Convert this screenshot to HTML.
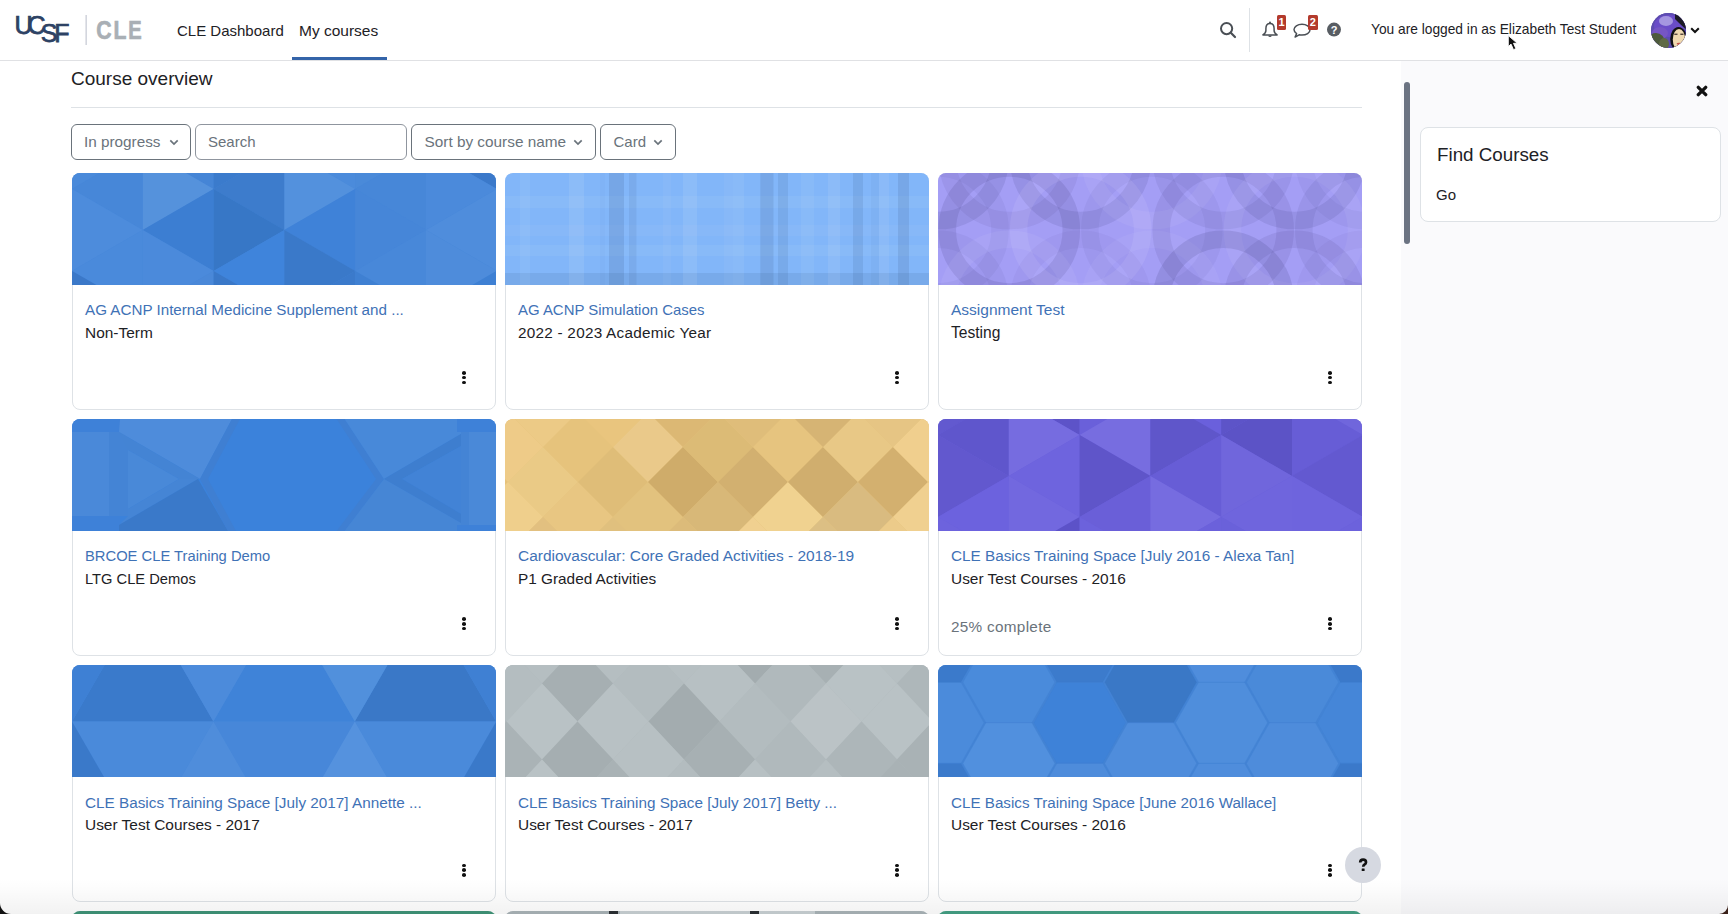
<!DOCTYPE html>
<html><head><meta charset="utf-8">
<style>
*{box-sizing:border-box;margin:0;padding:0}
html,body{width:1728px;height:914px;overflow:hidden;background:#fff;font-family:"Liberation Sans",sans-serif;color:#1d2125}
.abs{position:absolute}
#nav{position:absolute;left:0;top:0;width:1728px;height:61px;background:#fff;border-bottom:1px solid #e0e1e4}
.navt{position:absolute;top:21px;font-size:15px;line-height:20px;color:#1d2125;white-space:nowrap}
#drawer{position:absolute;left:1401px;top:61px;width:327px;height:853px;background:#fafafc}
.btn{position:absolute;top:123.5px;height:36px;border:1px solid #6a737b;border-radius:6px;color:#6a737b;font-size:15px;line-height:34px;padding-left:12.5px;white-space:nowrap}
.chev{position:absolute;top:14.2px}
.card{position:absolute;width:424px;height:237px;border:1px solid #dee2e6;border-radius:8px;background:#fff}
.cimg{position:absolute;width:424px;height:112px;border-radius:8px 8px 0 0;overflow:hidden}
.cimg svg{display:block}
.ttl{position:absolute;left:12.5px;top:126.5px;font-size:15.2px;line-height:20px;color:#3f72b6;white-space:nowrap}
.cat{position:absolute;left:12.5px;top:149px;font-size:15.3px;line-height:20px;color:#1d2125;white-space:nowrap}
.prog{position:absolute;left:12.5px;top:197px;font-size:15.3px;line-height:20px;color:#6a737b;white-space:nowrap}
.dots{position:absolute;left:389.5px;top:197.5px;width:4px;height:14px}
.dots i{position:absolute;left:0;width:4px;height:3.6px;border-radius:50%;background:#111}
</style></head>
<body>
<div id="nav">
  <!-- UCSF logo -->
  <svg class="abs" style="left:0;top:0" width="160" height="60" viewBox="0 0 160 60">
    <g fill="#2d4264" stroke="#2d4264" stroke-width="0.75" font-family="Liberation Sans" font-size="25">
      <text x="14.6" y="34">U</text>
      <text x="27.6" y="34">C</text>
      <text x="40.7" y="41.5">S</text>
      <text x="54.2" y="41.5">F</text>
    </g>
    <rect x="85.5" y="15" width="1.3" height="30" fill="#c9ccd6"/>
    <g fill="#a9afb5" stroke="#a9afb5" stroke-width="0.7" font-family="Liberation Sans" font-weight="700" font-size="26.5">
      <text transform="translate(96.2 39) scale(0.8 1)">C</text>
      <text transform="translate(113.6 39) scale(0.8 1)">L</text>
      <text transform="translate(128.2 39) scale(0.76 1)">E</text>
    </g>
  </svg>
  <div class="navt" style="left:177px">CLE Dashboard</div>
  <div class="navt" style="left:299px;font-size:15.5px">My courses</div>
  <div class="abs" style="left:291.5px;top:57px;width:95px;height:3px;background:#3464a9"></div>
  <!-- icons -->
  <svg class="abs" style="left:1219px;top:21px" width="18" height="18" viewBox="0 0 18 18">
    <circle cx="7.6" cy="7.6" r="5.6" fill="none" stroke="#4a4f55" stroke-width="2"/>
    <line x1="11.8" y1="11.8" x2="16" y2="16" stroke="#4a4f55" stroke-width="2.2" stroke-linecap="round"/>
  </svg>
  <div class="abs" style="left:1249px;top:8px;width:1px;height:44px;background:#dee2e6"></div>
  <svg class="abs" style="left:1260px;top:20px" width="20" height="20" viewBox="0 0 20 20">
    <path d="M10 3.4C7.3 3.4 5.9 5.4 5.9 8.4V10.6C5.9 12.5 4.8 13.8 2.9 14.9H17.1C15.2 13.8 14.1 12.5 14.1 10.6V8.4C14.1 5.4 12.7 3.4 10 3.4z" fill="none" stroke="#4a4f55" stroke-width="1.5" stroke-linejoin="round"/>
    <circle cx="10" cy="2.5" r="1" fill="#4a4f55"/>
    <path d="M8.3 15.4a1.7 1.7 0 0 0 3.4 0z" fill="#4a4f55"/>
  </svg>
  <div class="abs" style="left:1277px;top:15px;width:9px;height:15px;background:#b33a2c;border-radius:1.5px;color:#fff;font-size:11px;font-weight:700;line-height:15px;text-align:center">1</div>
  <svg class="abs" style="left:1292px;top:21px" width="22" height="19" viewBox="0 0 22 19">
    <path d="M10 3.2c-4.4 0-8 2.4-8 5.4 0 1.6 1 3 2.6 4l-1.5 3.5 4-2.3c.9.2 1.9.3 2.9.3 4.4 0 8-2.4 8-5.4s-3.6-5.5-8-5.5z" fill="none" stroke="#4a4f55" stroke-width="1.5" stroke-linejoin="round"/>
  </svg>
  <div class="abs" style="left:1307.5px;top:15px;width:10.5px;height:15px;background:#b33a2c;border-radius:1.5px;color:#fff;font-size:11px;font-weight:700;line-height:15px;text-align:center">2</div>
  <svg class="abs" style="left:1326px;top:22px" width="16" height="16" viewBox="0 0 16 16">
    <circle cx="8" cy="7.6" r="7" fill="#585d63"/>
    <text x="8" y="12.2" text-anchor="middle" fill="#fff" font-family="Liberation Sans" font-weight="700" font-size="11">?</text>
  </svg>
  <div class="abs" style="left:1371px;top:20px;font-size:13.75px;line-height:20px;color:#1d2125;white-space:nowrap">You are logged in as Elizabeth Test Student</div>
  <!-- avatar -->
  <div class="abs" style="left:1651px;top:12.5px;width:35px;height:35px;border-radius:50%;overflow:hidden;background:#5a4aa8">
    <svg width="35" height="35" viewBox="0 0 35 35">
      <rect width="35" height="35" fill="#5d4cb0"/>
      <ellipse cx="18" cy="13" rx="15" ry="11" fill="#6a4cc8"/>
      <ellipse cx="15" cy="8" rx="7" ry="5" fill="#a596e0"/>
      <ellipse cx="9" cy="20" rx="8" ry="6" fill="#7656c4"/>
      <path d="M24 0H35V16C32 14 28 10 24 6z" fill="#1c1b26"/>
      <ellipse cx="5" cy="29" rx="9" ry="9" fill="#4d5a3c"/>
      <ellipse cx="13" cy="31" rx="5" ry="6" fill="#5f6a45"/>
      <ellipse cx="27.5" cy="26" rx="8.3" ry="12" fill="#121114"/>
      <ellipse cx="28" cy="26.5" rx="6.2" ry="10.5" fill="#f0d9b0"/>
      <rect x="23.3" y="20.6" width="3.2" height="1.3" fill="#4a3a35"/>
      <rect x="29.3" y="20.6" width="3.2" height="1.3" fill="#4a3a35"/>
      <ellipse cx="28.2" cy="30.8" rx="2.6" ry="1.1" fill="#c4524a"/>
    </svg>
  </div>
  <svg class="abs" style="left:1690px;top:27px" width="10" height="7" viewBox="0 0 10 7">
    <path d="M1.2 1.2 5 5 8.8 1.2" fill="none" stroke="#111" stroke-width="2"/>
  </svg>
</div>

<div id="drawer">
  <div class="abs" style="left:3px;top:20.5px;width:6px;height:162.5px;border-radius:3px;background:#6b7382"></div>
  <svg class="abs" style="left:295px;top:24px" width="12" height="12" viewBox="0 0 12 12">
    <path d="M2.3 2.3 9.7 9.7M9.7 2.3 2.3 9.7" stroke="#111" stroke-width="3.3" stroke-linecap="round"/>
  </svg>
  <div class="abs" style="left:19px;top:65.6px;width:301px;height:95.5px;background:#fff;border:1px solid #dee2e6;border-radius:8px">
    <div class="abs" style="left:16px;top:15.6px;font-size:18.8px;line-height:24px;color:#1d2125;white-space:nowrap">Find Courses</div>
    <div class="abs" style="left:15px;top:57.3px;font-size:15px;line-height:20px;color:#1d2125">Go</div>
  </div>
</div>

<!-- main -->
<div class="abs" style="left:71px;top:67px;font-size:19px;line-height:24px;color:#1d2125;white-space:nowrap">Course overview</div>
<div class="abs" style="left:71px;top:106.5px;width:1291px;height:1px;background:#dee2e6"></div>

<div class="btn" style="left:71px;width:120px;font-size:15.3px;padding-left:12px">In progress<svg class="chev" style="left:97px" width="10" height="7" viewBox="0 0 10 7"><path d="M1.3 1.3 5 5 8.7 1.3" fill="none" stroke="#6a737b" stroke-width="1.7"/></svg></div>
<div class="btn" style="left:194.5px;width:212px;border-color:#8f959e">Search</div>
<div class="btn" style="left:411px;width:185px;font-size:15.35px">Sort by course name<svg class="chev" style="left:161px" width="10" height="7" viewBox="0 0 10 7"><path d="M1.3 1.3 5 5 8.7 1.3" fill="none" stroke="#6a737b" stroke-width="1.7"/></svg></div>
<div class="btn" style="left:600px;width:75.5px">Card<svg class="chev" style="left:52px" width="10" height="7" viewBox="0 0 10 7"><path d="M1.3 1.3 5 5 8.7 1.3" fill="none" stroke="#6a737b" stroke-width="1.7"/></svg></div>

<!--CARDS-->
<div class="card" style="left:71.5px;top:172.5px"><div class="ttl" style="font-size:15.2px">AG ACNP Internal Medicine Supplement and ...</div><div class="cat" style="font-size:15.45px">Non-Term</div><div class="dots"><i style="top:0"></i><i style="top:4.8px"></i><i style="top:9.6px"></i></div></div><div class="cimg" style="left:71.5px;top:172.5px"><svg width="424" height="112" viewBox="0 0 424 112"><rect width="424" height="112" fill="#4586d8"/><polygon points="0.0,-65.9 70.8,-25.0 0.0,16.0" fill="#4a8ada"/><polygon points="70.8,-25.0 0.0,16.0 70.8,57.0" fill="#4787d8"/><polygon points="0.0,16.0 70.8,57.0 0.0,97.9" fill="#4d8cdc"/><polygon points="70.8,57.0 0.0,97.9 70.8,138.9" fill="#4a8adb"/><polygon points="0.0,97.9 70.8,138.9 0.0,179.8" fill="#3b78c8"/><polygon points="141.6,-65.9 70.8,-25.0 141.6,16.0" fill="#4585d6"/><polygon points="70.8,-25.0 141.6,16.0 70.8,57.0" fill="#5592dc"/><polygon points="141.6,16.0 70.8,57.0 141.6,97.9" fill="#3c7ed2"/><polygon points="70.8,57.0 141.6,97.9 70.8,138.9" fill="#4b8adb"/><polygon points="141.6,97.9 70.8,138.9 141.6,179.8" fill="#4a88d8"/><polygon points="141.6,-65.9 212.4,-25.0 141.6,16.0" fill="#3b7bcc"/><polygon points="212.4,-25.0 141.6,16.0 212.4,57.0" fill="#3d7ccc"/><polygon points="141.6,16.0 212.4,57.0 141.6,97.9" fill="#3777c6"/><polygon points="212.4,57.0 141.6,97.9 212.4,138.9" fill="#3f84db"/><polygon points="141.6,97.9 212.4,138.9 141.6,179.8" fill="#3a78c8"/><polygon points="283.2,-65.9 212.4,-25.0 283.2,16.0" fill="#4b8bdb"/><polygon points="212.4,-25.0 283.2,16.0 212.4,57.0" fill="#5391dd"/><polygon points="283.2,16.0 212.4,57.0 283.2,97.9" fill="#3f82d8"/><polygon points="212.4,57.0 283.2,97.9 212.4,138.9" fill="#3a79c9"/><polygon points="283.2,97.9 212.4,138.9 283.2,179.8" fill="#3b7acb"/><polygon points="283.2,-65.9 354.0,-25.0 283.2,16.0" fill="#4a8ad9"/><polygon points="354.0,-25.0 283.2,16.0 354.0,57.0" fill="#4787d8"/><polygon points="283.2,16.0 354.0,57.0 283.2,97.9" fill="#4686d8"/><polygon points="354.0,57.0 283.2,97.9 354.0,138.9" fill="#4888d9"/><polygon points="283.2,97.9 354.0,138.9 283.2,179.8" fill="#3f80d2"/><polygon points="424.8,-65.9 354.0,-25.0 424.8,16.0" fill="#3b79ca"/><polygon points="354.0,-25.0 424.8,16.0 354.0,57.0" fill="#4b8adb"/><polygon points="424.8,16.0 354.0,57.0 424.8,97.9" fill="#4f8ddc"/><polygon points="354.0,57.0 424.8,97.9 354.0,138.9" fill="#4e8cdb"/><polygon points="424.8,97.9 354.0,138.9 424.8,179.8" fill="#3e80d3"/></svg></div>
<div class="card" style="left:504.5px;top:172.5px"><div class="ttl" style="font-size:14.94px">AG ACNP Simulation Cases</div><div class="cat" style="font-size:15.3px;letter-spacing:0.25px">2022 - 2023 Academic Year</div><div class="dots"><i style="top:0"></i><i style="top:4.8px"></i><i style="top:9.6px"></i></div></div><div class="cimg" style="left:504.5px;top:172.5px"><svg width="424" height="112" viewBox="0 0 424 112"><rect width="424" height="112" fill="#82b6f9"/><rect x="0" y="23" width="424" height="12" fill="#e8eef5" fill-opacity="0.07"/><rect x="0" y="52" width="424" height="11" fill="#e8eef5" fill-opacity="0.05"/><rect x="0" y="72" width="424" height="11" fill="#e8eef5" fill-opacity="0.07"/><rect x="0" y="100" width="424" height="12" fill="#27406a" fill-opacity="0.10"/><rect x="15" y="0" width="10.0" height="112" fill="#e8eef5" fill-opacity="0.07"/><rect x="64" y="0" width="15.0" height="112" fill="#e8eef5" fill-opacity="0.11"/><rect x="95" y="0" width="5.0" height="112" fill="#27406a" fill-opacity="0.02"/><rect x="104" y="0" width="15.0" height="112" fill="#27406a" fill-opacity="0.13"/><rect x="124" y="0" width="7.5" height="112" fill="#27406a" fill-opacity="0.09"/><rect x="158" y="0" width="8.0" height="112" fill="#e8eef5" fill-opacity="0.05"/><rect x="178" y="0" width="14.0" height="112" fill="#e8eef5" fill-opacity="0.11"/><rect x="219" y="0" width="9.0" height="112" fill="#e8eef5" fill-opacity="0.05"/><rect x="228" y="0" width="11.0" height="112" fill="#e8eef5" fill-opacity="0.08"/><rect x="255.3" y="0" width="13.2" height="112" fill="#27406a" fill-opacity="0.12"/><rect x="273" y="0" width="10.0" height="112" fill="#27406a" fill-opacity="0.1"/><rect x="296" y="0" width="13.0" height="112" fill="#e8eef5" fill-opacity="0.07"/><rect x="323" y="0" width="12.0" height="112" fill="#e8eef5" fill-opacity="0.1"/><rect x="348" y="0" width="10.0" height="112" fill="#27406a" fill-opacity="0.11"/><rect x="366" y="0" width="8.0" height="112" fill="#27406a" fill-opacity="0.04"/><rect x="374" y="0" width="10.0" height="112" fill="#e8eef5" fill-opacity="0.09"/><rect x="393" y="0" width="11.0" height="112" fill="#27406a" fill-opacity="0.12"/></svg></div>
<div class="card" style="left:937.5px;top:172.5px"><div class="ttl" style="font-size:15.53px">Assignment Test</div><div class="cat" style="font-size:15.6px">Testing</div><div class="dots"><i style="top:0"></i><i style="top:4.8px"></i><i style="top:9.6px"></i></div></div><div class="cimg" style="left:937.5px;top:172.5px"><svg width="424" height="112" viewBox="0 0 424 112"><rect width="424" height="112" fill="#a49ef5"/><circle cx="0.0" cy="-14.4" r="62" fill="none" stroke="#2a2560" stroke-opacity="0.104" stroke-width="17.5"/><circle cx="71.3" cy="-14.4" r="62" fill="none" stroke="#2a2560" stroke-opacity="0.065" stroke-width="17.5"/><circle cx="142.6" cy="-14.4" r="62" fill="none" stroke="#2a2560" stroke-opacity="0.104" stroke-width="17.5"/><circle cx="213.9" cy="-14.4" r="62" fill="none" stroke="#e8e6ff" stroke-opacity="0.078" stroke-width="17.5"/><circle cx="285.2" cy="-14.4" r="62" fill="none" stroke="#2a2560" stroke-opacity="0.078" stroke-width="17.5"/><circle cx="356.5" cy="-14.4" r="62" fill="none" stroke="#2a2560" stroke-opacity="0.104" stroke-width="17.5"/><circle cx="427.8" cy="-14.4" r="62" fill="none" stroke="#2a2560" stroke-opacity="0.052" stroke-width="17.5"/><circle cx="0.0" cy="56.9" r="62" fill="none" stroke="#2a2560" stroke-opacity="0.052" stroke-width="17.5"/><circle cx="71.3" cy="56.9" r="62" fill="none" stroke="#2a2560" stroke-opacity="0.117" stroke-width="17.5"/><circle cx="142.6" cy="56.9" r="62" fill="none" stroke="#e8e6ff" stroke-opacity="0.104" stroke-width="17.5"/><circle cx="213.9" cy="56.9" r="62" fill="none" stroke="#2a2560" stroke-opacity="0.052" stroke-width="17.5"/><circle cx="285.2" cy="56.9" r="62" fill="none" stroke="#2a2560" stroke-opacity="0.091" stroke-width="17.5"/><circle cx="356.5" cy="56.9" r="62" fill="none" stroke="#e8e6ff" stroke-opacity="0.078" stroke-width="17.5"/><circle cx="427.8" cy="56.9" r="62" fill="none" stroke="#2a2560" stroke-opacity="0.078" stroke-width="17.5"/><circle cx="0.0" cy="128.2" r="62" fill="none" stroke="#2a2560" stroke-opacity="0.052" stroke-width="17.5"/><circle cx="71.3" cy="128.2" r="62" fill="none" stroke="#e8e6ff" stroke-opacity="0.078" stroke-width="17.5"/><circle cx="142.6" cy="128.2" r="62" fill="none" stroke="#2a2560" stroke-opacity="0.039" stroke-width="17.5"/><circle cx="213.9" cy="128.2" r="62" fill="none" stroke="#e8e6ff" stroke-opacity="0.065" stroke-width="17.5"/><circle cx="285.2" cy="128.2" r="62" fill="none" stroke="#2a2560" stroke-opacity="0.130" stroke-width="17.5"/><circle cx="356.5" cy="128.2" r="62" fill="none" stroke="#2a2560" stroke-opacity="0.091" stroke-width="17.5"/><circle cx="427.8" cy="128.2" r="62" fill="none" stroke="#2a2560" stroke-opacity="0.039" stroke-width="17.5"/></svg></div>
<div class="card" style="left:71.5px;top:418.75px"><div class="ttl" style="font-size:14.75px">BRCOE CLE Training Demo</div><div class="cat" style="font-size:14.7px">LTG CLE Demos</div><div class="dots"><i style="top:0"></i><i style="top:4.8px"></i><i style="top:9.6px"></i></div></div><div class="cimg" style="left:71.5px;top:418.75px"><svg width="424" height="112" viewBox="0 0 424 112"><rect width="424" height="112" fill="#3b82db"/><polygon points="0.0,0.0 48.0,0.0 48.0,13.0 0.0,13.0" fill="#3e81d8"/><polygon points="0.0,13.0 37.0,13.0 37.0,97.0 0.0,97.0" fill="#4a89d9"/><polygon points="37.0,13.0 56.0,13.0 56.0,97.0 37.0,97.0" fill="#4484d5"/><polygon points="0.0,97.0 48.0,97.0 48.0,112.0 0.0,112.0" fill="#3e81d8"/><polygon points="48.0,0.0 160.0,0.0 128.0,60.0 47.0,13.0" fill="#4e8cdb"/><polygon points="47.0,13.0 128.0,60.0 107.0,60.0 56.0,31.0" fill="#4484d4"/><polygon points="56.0,31.0 107.0,60.0 56.0,90.0" fill="#4989d8"/><polygon points="56.0,90.0 107.0,60.0 126.0,60.0 47.0,106.0 56.0,97.0" fill="#4585d5"/><polygon points="47.0,106.0 126.0,60.0 156.0,112.0 47.0,112.0" fill="#3a79c9"/><polygon points="160.0,0.0 168.0,0.0 136.0,60.0 164.0,112.0 156.0,112.0 128.0,60.0" fill="#3f7fd2"/><polygon points="272.6,0.0 264.6,0.0 304.0,60.0 264.6,112.0 272.6,112.0 312.0,60.0" fill="#3f7fd2"/><polygon points="272.6,0.0 385.0,0.0 389.0,13.0 389.0,15.0 312.0,60.0" fill="#4889d9"/><polygon points="312.0,60.0 389.0,15.0 389.0,27.0 330.0,60.0" fill="#3e7ecf"/><polygon points="330.0,60.0 389.0,27.0 389.0,95.0" fill="#4283d6"/><polygon points="312.0,60.0 330.0,60.0 389.0,95.0 389.0,104.0" fill="#3e7ecf"/><polygon points="272.6,112.0 312.0,60.0 389.0,104.0 389.0,112.0" fill="#4686d5"/><polygon points="389.0,13.0 424.0,13.0 424.0,106.0 389.0,106.0" fill="#4a89d8"/><polygon points="389.0,13.0 397.0,13.0 397.0,106.0 389.0,106.0" fill="#4484d5"/><polygon points="385.0,0.0 424.0,0.0 424.0,13.0 385.0,13.0" fill="#3e81d8"/><polygon points="385.0,106.0 424.0,106.0 424.0,112.0 385.0,112.0" fill="#3e81d8"/></svg></div>
<div class="card" style="left:504.5px;top:418.75px"><div class="ttl" style="font-size:15.47px">Cardiovascular: Core Graded Activities - 2018-19</div><div class="cat" style="font-size:15.35px">P1 Graded Activities</div><div class="dots"><i style="top:0"></i><i style="top:4.8px"></i><i style="top:9.6px"></i></div></div><div class="cimg" style="left:504.5px;top:418.75px"><svg width="424" height="112" viewBox="0 0 424 112"><rect width="424" height="112" fill="#e6c27b"/><polygon points="3.0,63.0 38.0,28.0 73.0,63.0 38.0,98.0" fill="#eaca86"/><polygon points="38.0,28.0 73.0,-7.0 108.0,28.0 73.0,63.0" fill="#e6c37c"/><polygon points="38.0,98.0 73.0,63.0 108.0,98.0 73.0,133.0" fill="#e8c682"/><polygon points="73.0,63.0 108.0,28.0 143.0,63.0 108.0,98.0" fill="#dfbd78"/><polygon points="108.0,28.0 143.0,-7.0 178.0,28.0 143.0,63.0" fill="#eac98a"/><polygon points="108.0,98.0 143.0,63.0 178.0,98.0 143.0,133.0" fill="#e2c27e"/><polygon points="143.0,63.0 178.0,28.0 213.0,63.0 178.0,98.0" fill="#cfac6a"/><polygon points="178.0,28.0 213.0,-7.0 248.0,28.0 213.0,63.0" fill="#dcbb76"/><polygon points="178.0,98.0 213.0,63.0 248.0,98.0 213.0,133.0" fill="#d8b878"/><polygon points="213.0,63.0 248.0,28.0 283.0,63.0 248.0,98.0" fill="#d2b070"/><polygon points="248.0,28.0 283.0,-7.0 318.0,28.0 283.0,63.0" fill="#e6c47f"/><polygon points="248.0,98.0 283.0,63.0 318.0,98.0 283.0,133.0" fill="#f0d290"/><polygon points="283.0,63.0 318.0,28.0 353.0,63.0 318.0,98.0" fill="#d0ae6e"/><polygon points="318.0,28.0 353.0,-7.0 388.0,28.0 353.0,63.0" fill="#e8c886"/><polygon points="318.0,98.0 353.0,63.0 388.0,98.0 353.0,133.0" fill="#d9bb80"/><polygon points="353.0,63.0 388.0,28.0 423.0,63.0 388.0,98.0" fill="#d3b06f"/><polygon points="388.0,28.0 423.0,-7.0 458.0,28.0 423.0,63.0" fill="#f0cf8e"/><polygon points="388.0,98.0 423.0,63.0 458.0,98.0 423.0,133.0" fill="#f0d090"/><polygon points="-32.0,28.0 3.0,-7.0 38.0,28.0 3.0,63.0" fill="#eecb88"/><polygon points="-32.0,98.0 3.0,63.0 38.0,98.0 3.0,133.0" fill="#efcf8c"/><polygon points="3.0,-7.0 38.0,-42.0 73.0,-7.0 38.0,28.0" fill="#ecca86"/><polygon points="73.0,-7.0 108.0,-42.0 143.0,-7.0 108.0,28.0" fill="#e9c57e"/><polygon points="143.0,-7.0 178.0,-42.0 213.0,-7.0 178.0,28.0" fill="#dcb874"/><polygon points="213.0,-7.0 248.0,-42.0 283.0,-7.0 248.0,28.0" fill="#dfbd7a"/><polygon points="283.0,-7.0 318.0,-42.0 353.0,-7.0 318.0,28.0" fill="#d6b474"/><polygon points="353.0,-7.0 388.0,-42.0 423.0,-7.0 388.0,28.0" fill="#e6c584"/><polygon points="3.0,133.0 38.0,98.0 73.0,133.0 38.0,168.0" fill="#e2c080"/><polygon points="73.0,133.0 108.0,98.0 143.0,133.0 108.0,168.0" fill="#e0c07e"/><polygon points="143.0,133.0 178.0,98.0 213.0,133.0 178.0,168.0" fill="#dcbb7a"/><polygon points="213.0,133.0 248.0,98.0 283.0,133.0 248.0,168.0" fill="#f0d090"/><polygon points="283.0,133.0 318.0,98.0 353.0,133.0 318.0,168.0" fill="#dcbf84"/><polygon points="353.0,133.0 388.0,98.0 423.0,133.0 388.0,168.0" fill="#eccb8a"/></svg></div>
<div class="card" style="left:937.5px;top:418.75px"><div class="ttl" style="font-size:15.3px">CLE Basics Training Space [July 2016 - Alexa Tan]</div><div class="cat" style="font-size:15.45px">User Test Courses - 2016</div><div class="prog" style="font-size:15.3px;letter-spacing:0.3px">25% complete</div><div class="dots"><i style="top:0"></i><i style="top:4.8px"></i><i style="top:9.6px"></i></div></div><div class="cimg" style="left:937.5px;top:418.75px"><svg width="424" height="112" viewBox="0 0 424 112"><rect width="424" height="112" fill="#6a60da"/><polygon points="0.0,-65.9 70.8,-25.0 0.0,16.0" fill="#6259cf"/><polygon points="70.8,-25.0 0.0,16.0 70.8,57.0" fill="#5f56cc"/><polygon points="0.0,16.0 70.8,57.0 0.0,97.9" fill="#6258ce"/><polygon points="70.8,57.0 0.0,97.9 70.8,138.9" fill="#6c62de"/><polygon points="0.0,97.9 70.8,138.9 0.0,179.8" fill="#6d63dd"/><polygon points="141.6,-65.9 70.8,-25.0 141.6,16.0" fill="#5d53c8"/><polygon points="70.8,-25.0 141.6,16.0 70.8,57.0" fill="#766ce0"/><polygon points="141.6,16.0 70.8,57.0 141.6,97.9" fill="#6e64de"/><polygon points="70.8,57.0 141.6,97.9 70.8,138.9" fill="#7268df"/><polygon points="141.6,97.9 70.8,138.9 141.6,179.8" fill="#5c52c8"/><polygon points="141.6,-65.9 212.4,-25.0 141.6,16.0" fill="#6a60da"/><polygon points="212.4,-25.0 141.6,16.0 212.4,57.0" fill="#776de0"/><polygon points="141.6,16.0 212.4,57.0 141.6,97.9" fill="#5f55c9"/><polygon points="212.4,57.0 141.6,97.9 212.4,138.9" fill="#6a5fd8"/><polygon points="141.6,97.9 212.4,138.9 141.6,179.8" fill="#6c62dc"/><polygon points="283.2,-65.9 212.4,-25.0 283.2,16.0" fill="#6a60dc"/><polygon points="212.4,-25.0 283.2,16.0 212.4,57.0" fill="#5f56ca"/><polygon points="283.2,16.0 212.4,57.0 283.2,97.9" fill="#675dd6"/><polygon points="212.4,57.0 283.2,97.9 212.4,138.9" fill="#766ce0"/><polygon points="283.2,97.9 212.4,138.9 283.2,179.8" fill="#6b61db"/><polygon points="283.2,-65.9 354.0,-25.0 283.2,16.0" fill="#5d54c8"/><polygon points="354.0,-25.0 283.2,16.0 354.0,57.0" fill="#5c53c6"/><polygon points="283.2,16.0 354.0,57.0 283.2,97.9" fill="#7066dc"/><polygon points="354.0,57.0 283.2,97.9 354.0,138.9" fill="#6f65dd"/><polygon points="283.2,97.9 354.0,138.9 283.2,179.8" fill="#6a61da"/><polygon points="424.8,-65.9 354.0,-25.0 424.8,16.0" fill="#7066dc"/><polygon points="354.0,-25.0 424.8,16.0 354.0,57.0" fill="#675dd6"/><polygon points="424.8,16.0 354.0,57.0 424.8,97.9" fill="#6359d0"/><polygon points="354.0,57.0 424.8,97.9 354.0,138.9" fill="#6e64dd"/><polygon points="424.8,97.9 354.0,138.9 424.8,179.8" fill="#6c62dc"/></svg></div>
<div class="card" style="left:71.5px;top:665.0px"><div class="ttl" style="font-size:15.3px">CLE Basics Training Space [July 2017] Annette ...</div><div class="cat" style="font-size:15.45px">User Test Courses - 2017</div><div class="dots"><i style="top:0"></i><i style="top:4.8px"></i><i style="top:9.6px"></i></div></div><div class="cimg" style="left:71.5px;top:665.0px"><svg width="424" height="112" viewBox="0 0 424 112"><rect width="424" height="112" fill="#4587da"/><polygon points="0.0,56.6 70.7,-65.9 141.4,56.6" fill="#3a7acb"/><polygon points="141.4,56.6 212.1,-65.9 282.8,56.6" fill="#3f83d8"/><polygon points="282.8,56.6 353.5,-65.9 424.2,56.6" fill="#3a78c7"/><polygon points="-70.7,-65.9 70.7,-65.9 0.0,56.6" fill="#3e80d4"/><polygon points="70.7,-65.9 212.1,-65.9 141.4,56.6" fill="#4c8bdb"/><polygon points="212.1,-65.9 353.5,-65.9 282.8,56.6" fill="#5190dc"/><polygon points="353.5,-65.9 494.9,-65.9 424.2,56.6" fill="#3f80d3"/><polygon points="0.0,56.6 141.4,56.6 70.7,179.1" fill="#4a8ada"/><polygon points="141.4,56.6 282.8,56.6 212.1,179.1" fill="#4787d9"/><polygon points="282.8,56.6 424.2,56.6 353.5,179.1" fill="#4a8ada"/><polygon points="0.0,56.6 -70.7,179.1 70.7,179.1" fill="#3a79c9"/><polygon points="141.4,56.6 70.7,179.1 212.1,179.1" fill="#4f8ddb"/><polygon points="282.8,56.6 212.1,179.1 353.5,179.1" fill="#5592de"/><polygon points="424.2,56.6 353.5,179.1 494.9,179.1" fill="#3a79c9"/></svg></div>
<div class="card" style="left:504.5px;top:665.0px"><div class="ttl" style="font-size:15.28px">CLE Basics Training Space [July 2017] Betty ...</div><div class="cat" style="font-size:15.45px">User Test Courses - 2017</div><div class="dots"><i style="top:0"></i><i style="top:4.8px"></i><i style="top:9.6px"></i></div></div><div class="cimg" style="left:504.5px;top:665.0px"><svg width="424" height="112" viewBox="0 0 424 112"><rect width="424" height="112" fill="#b0b9bc"/><polygon points="-69.5,-19.4 -34.0,-57.4 1.5,-19.4 -34.0,18.6" fill="#b0b9bc"/><polygon points="1.5,-19.4 37.0,-57.4 72.5,-19.4 37.0,18.6" fill="#b5bec1"/><polygon points="72.5,-19.4 108.0,-57.4 143.5,-19.4 108.0,18.6" fill="#b5bec1"/><polygon points="143.5,-19.4 179.0,-57.4 214.5,-19.4 179.0,18.6" fill="#b6bfc2"/><polygon points="214.5,-19.4 250.0,-57.4 285.5,-19.4 250.0,18.6" fill="#a3acaf"/><polygon points="285.5,-19.4 321.0,-57.4 356.5,-19.4 321.0,18.6" fill="#a7b0b3"/><polygon points="356.5,-19.4 392.0,-57.4 427.5,-19.4 392.0,18.6" fill="#b6bfc2"/><polygon points="-34.0,18.6 1.5,-19.4 37.0,18.6 1.5,56.6" fill="#b4bdc0"/><polygon points="37.0,18.6 72.5,-19.4 108.0,18.6 72.5,56.6" fill="#a6afb2"/><polygon points="108.0,18.6 143.5,-19.4 179.0,18.6 143.5,56.6" fill="#b3bcbf"/><polygon points="179.0,18.6 214.5,-19.4 250.0,18.6 214.5,56.6" fill="#b7c0c3"/><polygon points="250.0,18.6 285.5,-19.4 321.0,18.6 285.5,56.6" fill="#b0b9bc"/><polygon points="321.0,18.6 356.5,-19.4 392.0,18.6 356.5,56.6" fill="#b9c2c5"/><polygon points="392.0,18.6 427.5,-19.4 463.0,18.6 427.5,56.6" fill="#aeb7ba"/><polygon points="-69.5,56.6 -34.0,18.6 1.5,56.6 -34.0,94.6" fill="#b0b9bc"/><polygon points="1.5,56.6 37.0,18.6 72.5,56.6 37.0,94.6" fill="#b9c2c5"/><polygon points="72.5,56.6 108.0,18.6 143.5,56.6 108.0,94.6" fill="#b8c1c4"/><polygon points="143.5,56.6 179.0,18.6 214.5,56.6 179.0,94.6" fill="#a3acaf"/><polygon points="214.5,56.6 250.0,18.6 285.5,56.6 250.0,94.6" fill="#b3bcbf"/><polygon points="285.5,56.6 321.0,18.6 356.5,56.6 321.0,94.6" fill="#bbc3c6"/><polygon points="356.5,56.6 392.0,18.6 427.5,56.6 392.0,94.6" fill="#b9c2c5"/><polygon points="-34.0,94.6 1.5,56.6 37.0,94.6 1.5,132.6" fill="#aab3b6"/><polygon points="37.0,94.6 72.5,56.6 108.0,94.6 72.5,132.6" fill="#a5aeb1"/><polygon points="108.0,94.6 143.5,56.6 179.0,94.6 143.5,132.6" fill="#b7c0c3"/><polygon points="179.0,94.6 214.5,56.6 250.0,94.6 214.5,132.6" fill="#a7b0b3"/><polygon points="250.0,94.6 285.5,56.6 321.0,94.6 285.5,132.6" fill="#b0b9bc"/><polygon points="321.0,94.6 356.5,56.6 392.0,94.6 356.5,132.6" fill="#adb6b9"/><polygon points="392.0,94.6 427.5,56.6 463.0,94.6 427.5,132.6" fill="#a9b2b5"/><polygon points="-69.5,132.6 -34.0,94.6 1.5,132.6 -34.0,170.6" fill="#b0b9bc"/><polygon points="1.5,132.6 37.0,94.6 72.5,132.6 37.0,170.6" fill="#b9c2c5"/><polygon points="72.5,132.6 108.0,94.6 143.5,132.6 108.0,170.6" fill="#a9b2b5"/><polygon points="143.5,132.6 179.0,94.6 214.5,132.6 179.0,170.6" fill="#b3bcbf"/><polygon points="214.5,132.6 250.0,94.6 285.5,132.6 250.0,170.6" fill="#b7c0c3"/><polygon points="285.5,132.6 321.0,94.6 356.5,132.6 321.0,170.6" fill="#b5bec1"/><polygon points="356.5,132.6 392.0,94.6 427.5,132.6 392.0,170.6" fill="#a9b2b5"/></svg></div>
<div class="card" style="left:937.5px;top:665.0px"><div class="ttl" style="font-size:15.2px">CLE Basics Training Space [June 2016 Wallace]</div><div class="cat" style="font-size:15.45px">User Test Courses - 2016</div><div class="dots"><i style="top:0"></i><i style="top:4.8px"></i><i style="top:9.6px"></i></div></div><div class="cimg" style="left:937.5px;top:665.0px"><svg width="424" height="112" viewBox="0 0 424 112"><rect width="424" height="112" fill="#4484d5"/><polygon points="-46.0,57.8 -23.0,17.2 23.0,17.2 46.0,57.8 23.0,98.4 -23.0,98.4" fill="#4b8bdb" stroke="#3f7fd0" stroke-width="0.6" stroke-opacity="0.5"/><polygon points="24.9,17.2 47.9,-23.4 93.9,-23.4 116.9,17.2 93.9,57.8 47.9,57.8" fill="#4a8bdb" stroke="#3f7fd0" stroke-width="0.6" stroke-opacity="0.5"/><polygon points="24.9,98.4 47.9,57.8 93.9,57.8 116.9,98.4 93.9,139.0 47.9,139.0" fill="#5190de" stroke="#3f7fd0" stroke-width="0.6" stroke-opacity="0.5"/><polygon points="95.8,57.8 118.8,17.2 164.8,17.2 187.8,57.8 164.8,98.4 118.8,98.4" fill="#3e82d8" stroke="#3f7fd0" stroke-width="0.6" stroke-opacity="0.5"/><polygon points="166.7,17.2 189.7,-23.4 235.7,-23.4 258.7,17.2 235.7,57.8 189.7,57.8" fill="#3a78c6" stroke="#3f7fd0" stroke-width="0.6" stroke-opacity="0.5"/><polygon points="166.7,98.4 189.7,57.8 235.7,57.8 258.7,98.4 235.7,139.0 189.7,139.0" fill="#4f8ddc" stroke="#3f7fd0" stroke-width="0.6" stroke-opacity="0.5"/><polygon points="237.6,57.8 260.6,17.2 306.6,17.2 329.6,57.8 306.6,98.4 260.6,98.4" fill="#4f8edc" stroke="#3f7fd0" stroke-width="0.6" stroke-opacity="0.5"/><polygon points="308.5,17.2 331.5,-23.4 377.5,-23.4 400.5,17.2 377.5,57.8 331.5,57.8" fill="#4a8ad9" stroke="#3f7fd0" stroke-width="0.6" stroke-opacity="0.5"/><polygon points="308.5,98.4 331.5,57.8 377.5,57.8 400.5,98.4 377.5,139.0 331.5,139.0" fill="#4e8cdb" stroke="#3f7fd0" stroke-width="0.6" stroke-opacity="0.5"/><polygon points="379.4,57.8 402.4,17.2 448.4,17.2 471.4,57.8 448.4,98.4 402.4,98.4" fill="#4586d8" stroke="#3f7fd0" stroke-width="0.6" stroke-opacity="0.5"/><polygon points="-46.0,-23.4 -23.0,-64.0 23.0,-64.0 46.0,-23.4 23.0,17.2 -23.0,17.2" fill="#3b7acb" stroke="#3f7fd0" stroke-width="0.6" stroke-opacity="0.5"/><polygon points="-46.0,139.0 -23.0,98.4 23.0,98.4 46.0,139.0 23.0,179.6 -23.0,179.6" fill="#3b7acb" stroke="#3f7fd0" stroke-width="0.6" stroke-opacity="0.5"/><polygon points="95.8,-23.4 118.8,-64.0 164.8,-64.0 187.8,-23.4 164.8,17.2 118.8,17.2" fill="#3c7bcc" stroke="#3f7fd0" stroke-width="0.6" stroke-opacity="0.5"/><polygon points="237.6,-23.4 260.6,-64.0 306.6,-64.0 329.6,-23.4 306.6,17.2 260.6,17.2" fill="#4f8ddc" stroke="#3f7fd0" stroke-width="0.6" stroke-opacity="0.5"/><polygon points="379.4,-23.4 402.4,-64.0 448.4,-64.0 471.4,-23.4 448.4,17.2 402.4,17.2" fill="#3b79ca" stroke="#3f7fd0" stroke-width="0.6" stroke-opacity="0.5"/><polygon points="95.8,139.0 118.8,98.4 164.8,98.4 187.8,139.0 164.8,179.6 118.8,179.6" fill="#4e8cdb" stroke="#3f7fd0" stroke-width="0.6" stroke-opacity="0.5"/><polygon points="237.6,139.0 260.6,98.4 306.6,98.4 329.6,139.0 306.6,179.6 260.6,179.6" fill="#4f8ddc" stroke="#3f7fd0" stroke-width="0.6" stroke-opacity="0.5"/><polygon points="379.4,139.0 402.4,98.4 448.4,98.4 471.4,139.0 448.4,179.6 402.4,179.6" fill="#3b79ca" stroke="#3f7fd0" stroke-width="0.6" stroke-opacity="0.5"/></svg></div>
<div class="card" style="left:71.5px;top:911.25px"></div><div class="cimg" style="left:71.5px;top:911.25px"><svg width="424" height="112" viewBox="0 0 424 112"><rect width="424" height="112" fill="#3f9478"/></svg></div>
<div class="card" style="left:504.5px;top:911.25px"></div><div class="cimg" style="left:504.5px;top:911.25px"><svg width="424" height="112" viewBox="0 0 424 112"><rect width="424" height="112" fill="#aab4b8"/><rect x="104" y="0" width="9" height="10" fill="#2b2f33"/><rect x="115" y="0" width="195" height="10" fill="#c9d1d4"/><rect x="245" y="0" width="9" height="10" fill="#2b2f33"/></svg></div>
<div class="card" style="left:937.5px;top:911.25px"></div><div class="cimg" style="left:937.5px;top:911.25px"><svg width="424" height="112" viewBox="0 0 424 112"><rect width="424" height="112" fill="#44a084"/></svg></div>
<!--/CARDS-->


<!-- help button -->
<div class="abs" style="left:1345px;top:847px;width:36px;height:36px;border-radius:50%;background:#d6d9e1"></div>
<svg class="abs" style="left:1356px;top:857px" width="14" height="16" viewBox="0 0 14 16">
  <path d="M4.2 5.6c0-2 1.2-3 2.9-3 1.7 0 2.9 1 2.9 2.6 0 1.3-.8 1.9-1.6 2.4-.8.5-1.1.9-1.1 1.8v.3" fill="none" stroke="#111" stroke-width="2.7" stroke-linecap="butt"/>
  <rect x="5.7" y="11.4" width="2.9" height="2.7" rx="0.4" fill="#111"/>
</svg>
<!-- bottom window shading -->
<div class="abs" style="left:0;top:878px;width:1728px;height:36px;background:linear-gradient(to bottom,rgba(0,0,0,0),rgba(0,0,0,0.012) 30%,rgba(0,0,0,0.05))"></div>
<svg class="abs" style="left:0;top:903px" width="11" height="11" viewBox="0 0 11 11"><path d="M0 0V11H11A11 11 0 0 1 0 0z" fill="#111"/></svg>
<svg class="abs" style="left:1719px;top:905px" width="9" height="9" viewBox="0 0 9 9"><path d="M9 0V9H0A9 9 0 0 0 9 0z" fill="#3a2018"/></svg>
<!-- mouse cursor -->
<svg class="abs" style="left:1506px;top:33px" width="14" height="18" viewBox="0 0 14 18">
  <path d="M2.3 2.6V13.6l2.7-2.5 2.5 5.6 2.4-1.1-2.4-5.3h3.8z" fill="#111" stroke="#fff" stroke-width="0.9" stroke-linejoin="round"/>
</svg>
</body></html>
